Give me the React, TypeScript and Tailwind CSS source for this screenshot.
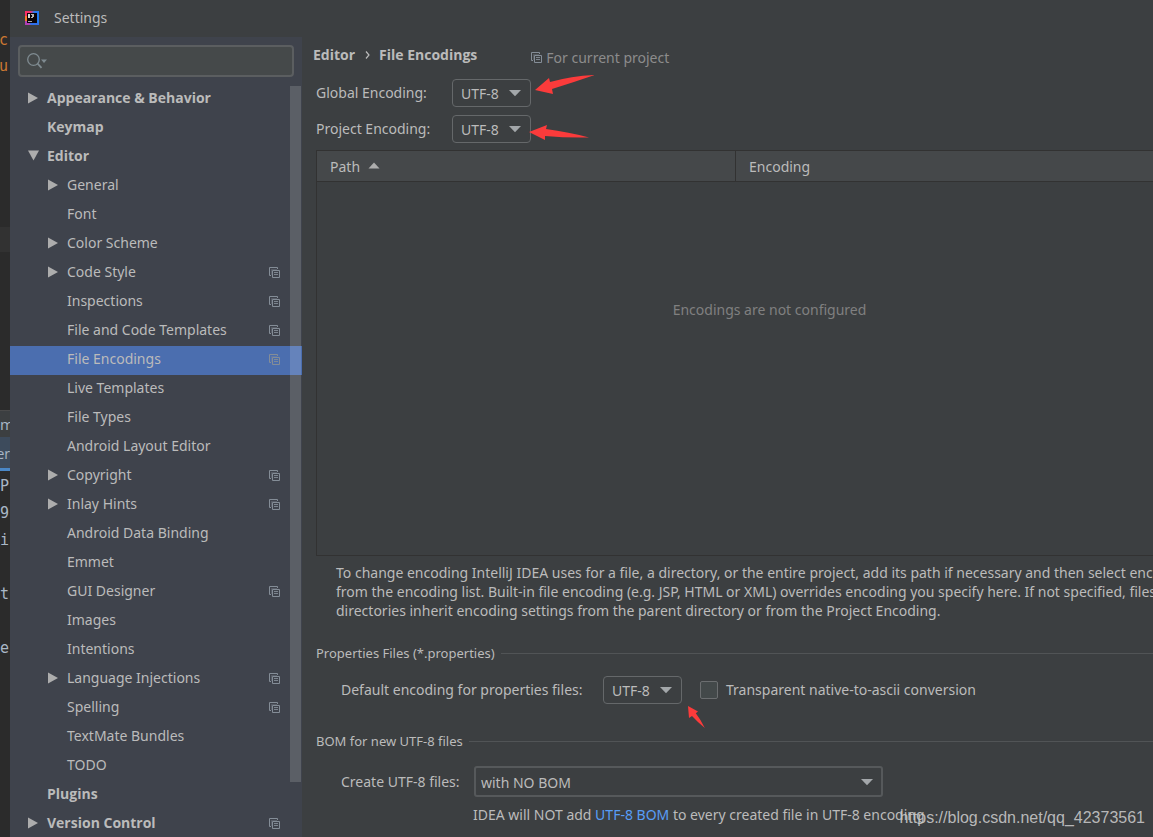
import React from "react";

type TreeItem = {
  label: string;
  level: 0 | 1;
  arrow?: "open" | "closed";
  project?: boolean;
  selected?: boolean;
};

const tree: TreeItem[] = [
  { label: "Appearance & Behavior", level: 0, arrow: "closed" },
  { label: "Keymap", level: 0 },
  { label: "Editor", level: 0, arrow: "open" },
  { label: "General", level: 1, arrow: "closed" },
  { label: "Font", level: 1 },
  { label: "Color Scheme", level: 1, arrow: "closed" },
  { label: "Code Style", level: 1, arrow: "closed", project: true },
  { label: "Inspections", level: 1, project: true },
  { label: "File and Code Templates", level: 1, project: true },
  { label: "File Encodings", level: 1, project: true, selected: true },
  { label: "Live Templates", level: 1 },
  { label: "File Types", level: 1 },
  { label: "Android Layout Editor", level: 1 },
  { label: "Copyright", level: 1, arrow: "closed", project: true },
  { label: "Inlay Hints", level: 1, arrow: "closed", project: true },
  { label: "Android Data Binding", level: 1 },
  { label: "Emmet", level: 1 },
  { label: "GUI Designer", level: 1, project: true },
  { label: "Images", level: 1 },
  { label: "Intentions", level: 1 },
  { label: "Language Injections", level: 1, arrow: "closed", project: true },
  { label: "Spelling", level: 1, project: true },
  { label: "TextMate Bundles", level: 1 },
  { label: "TODO", level: 1 },
  { label: "Plugins", level: 0 },
  { label: "Version Control", level: 0, arrow: "closed", project: true },
];

function Logo() {
  return (
    <svg width="14" height="14" viewBox="0 0 14 14" aria-hidden="true">
      <defs>
        <linearGradient id="ij" x1="0" y1="0" x2="1" y2="0.4">
          <stop offset="0" stopColor="#ff2d62" />
          <stop offset="0.35" stopColor="#f0306f" />
          <stop offset="0.6" stopColor="#2a78f0" />
          <stop offset="1" stopColor="#1f7bf2" />
        </linearGradient>
      </defs>
      <rect width="14" height="14" fill="url(#ij)" />
      <path d="M0 5h3v5H0z" fill="#fb7a2b" />
      <path d="M0 10h3l3 4H0z" fill="#b03fb4" />
      <path d="M5 12h9v2H6z" fill="#2f6fe8" />
      <rect x="2" y="2" width="10" height="10" fill="#0b0508" />
      <path d="M3 3h2v4H3z" fill="#d8d8d8" />
      <path d="M6 3h3v3H8v1H6V6h1V4H6z" fill="#b4b4b4" />
      <path d="M3 10h4v1H3z" fill="#a8a8a8" />
    </svg>
  );
}

function ProjectIcon() {
  return (
    <svg width="11" height="11" viewBox="0 0 11 11" fill="none" stroke="#848d97" aria-hidden="true" className="shrink-0">
      <path d="M2 8.500H0.500v-8h8V2" />
      <path d="M2.500 8V2.500H8" strokeOpacity="0.35" />
      <path d="M3.500 3.500h7v7h-7z" />
      <path d="M5 5.500h4M5 7.500h4" strokeOpacity="0.9" />
    </svg>
  );
}

function TreeArrow({ open }: { open: boolean }) {
  return (
    <svg width="12" height="12" viewBox="0 0 12 12" fill="#adadad" aria-hidden="true">
      {open ? <path d="M1 0.500h11L6.500 10.500z" /> : <path d="M1 0.500v11L11 6z" />}
    </svg>
  );
}

function Combo({ id, value, wide }: { id: string; value: string; wide?: boolean }) {
  return (
    <span className={wide ? "relative block h-[31px] w-[409px]" : "relative block h-7 w-[79px]"}>
      <select
        id={id}
        defaultValue={value}
        className={
          wide
            ? "block h-full w-full appearance-none rounded-[3px] border-2 border-[#56595b] bg-[#3c3f41] pt-[2px] pl-[5px] text-[#bbbbbb] outline-none"
            : "block h-full w-full appearance-none rounded border border-[#65686a] bg-[#3c3f41] pt-px pl-2 text-[#bbbbbb] outline-none"
        }
      >
        <option>{value}</option>
      </select>
      <svg
        width="12"
        height="7"
        viewBox="0 0 12 7"
        fill="#a3a7aa"
        aria-hidden="true"
        className="pointer-events-none absolute top-1/2 right-[10px] -translate-y-1/2"
      >
        <path d="M0 0.500h12L6 6.800z" />
      </svg>
    </span>
  );
}

function EditorEdge() {
  return (
    <div aria-hidden="true" className="flex w-[10px] shrink-0 flex-col overflow-hidden bg-[#2b2b2b] font-['DejaVu_Sans_Mono',monospace] text-[15px] text-[#a9b7c6]">
      <div className="flex h-[79px] flex-col items-end pt-[27px] pr-[2px] leading-[26px] text-[#cc7832]">
        <span>c</span>
        <span>u</span>
      </div>
      <div className="mt-[148px] h-[25px] shrink-0 bg-[#323232]" />
      <div className="mt-[158px] h-[27px] shrink-0 border-t border-[#4a4a4a] bg-[#3c3f41] font-['Open_Sans',sans-serif] leading-[26px]">m</div>
      <div className="flex h-[34px] shrink-0 justify-end border-b-[3px] border-[#4a88c7] bg-[#3d4b5c] font-['Open_Sans',sans-serif] text-[14px] leading-[34px]">er</div>
      <div className="flex flex-col items-end pt-[2px] pr-[1px] leading-[27px]">
        <span>P</span>
        <span>9</span>
        <span>i</span>
        <span className="h-[27px]" />
        <span>t</span>
        <span className="h-[27px]" />
        <span>e</span>
      </div>
    </div>
  );
}

function GroupTitle({ children }: { children: React.ReactNode }) {
  return (
    <h2 className="flex items-center gap-[6px] text-[13px] leading-5">
      {children}
      <span className="h-px flex-1 bg-[#515456]" />
    </h2>
  );
}

export default function App() {
  return (
    <div className="relative flex h-screen overflow-hidden bg-[#3c3f41] font-['Noto_Sans',sans-serif] text-[14px] leading-5 text-[#bbbbbb]">
      <EditorEdge />
      <div className="flex min-w-0 flex-1 flex-col">
        <header className="flex h-[37px] shrink-0 items-center gap-[15px] pb-px pl-[15px]">
          <Logo />
          <h1>Settings</h1>
        </header>
        <div className="flex min-h-0 flex-1">
          <aside className="flex w-[292px] shrink-0 flex-col bg-[#3f434c]">
            <label className="mx-2 mt-2 flex h-8 shrink-0 items-center rounded-[4px] border-2 border-[#5b5e60] bg-[#45494a] pl-[7px]">
              <svg width="22" height="16" viewBox="0 0 22 16" fill="none" aria-hidden="true">
                <circle cx="6.500" cy="6.500" r="5.800" stroke="#7f8b91" strokeWidth="1.300" />
                <path d="M10.500 10.500l4 4.300" stroke="#7f8b91" strokeWidth="1.800" />
                <path d="M14 6.500h6l-3 3.500z" fill="#7f8b91" />
              </svg>
              <input type="text" aria-label="Search settings" className="min-w-0 flex-1 bg-transparent outline-none" />
            </label>
            <nav className="relative mt-2 min-h-0 flex-1 overflow-hidden">
              <ul>
                {tree.map((item) => (
                  <li key={item.label} className={item.selected ? "bg-[#4b6eaf]" : ""}>
                    <a
                      href="#"
                      className={
                        item.level === 0
                          ? "flex h-[29px] items-center pr-[22px] pb-[3px] pl-[17px] font-['Open_Sans',sans-serif] font-bold"
                          : "flex h-[29px] items-center pr-[22px] pb-[3px] pl-[37px]"
                      }
                    >
                      <span className="flex w-5 shrink-0">{item.arrow && <TreeArrow open={item.arrow === "open"} />}</span>
                      <span className="flex-1 whitespace-nowrap">{item.label}</span>
                      {item.project && <ProjectIcon />}
                    </a>
                  </li>
                ))}
              </ul>
              <div className="absolute top-px right-px h-[696px] w-[11px] bg-white/15" />
            </nav>
          </aside>
          <main className="min-w-0 flex-1 overflow-hidden">
            <div className="-mr-[70px] pl-[14px]">
              <div className="-ml-[3px] flex h-9 items-center">
                <nav className="flex items-center font-['Open_Sans',sans-serif] font-bold">
                  <a href="#">Editor</a>
                  <svg width="5" height="8" viewBox="0 0 5 8" fill="none" stroke="#bbbbbb" strokeWidth="1.200" aria-hidden="true" className="mr-[9px] ml-[10px]">
                    <path d="M1 0.500L4 4L1 7.500" />
                  </svg>
                  <a href="#">File Encodings</a>
                </nav>
                <p className="mt-[5px] ml-[54px] flex items-center gap-1 text-[#8c8c8c]">
                  <ProjectIcon />
                  For current project
                </p>
              </div>
              <div className="flex flex-col gap-2 pt-[6px]">
                <div className="flex items-center">
                  <label htmlFor="global" className="w-[136px]">Global Encoding:</label>
                  <Combo id="global" value="UTF-8" />
                </div>
                <div className="flex items-center">
                  <label htmlFor="project" className="w-[136px]">Project Encoding:</label>
                  <Combo id="project" value="UTF-8" />
                </div>
              </div>
              <table className="mt-[7px] w-full table-fixed border-collapse border border-[#323232] text-left">
                <thead className="bg-[#45484a]">
                  <tr className="h-[31px] border-b border-[#323232]">
                    <th className="w-[419px] border-r border-[#323232] pt-px pl-[13px] font-normal">
                      <span className="flex items-center gap-2">
                        Path
                        <svg width="12" height="7" viewBox="0 0 12 7" fill="#adadad" aria-hidden="true" className="mb-[2px]">
                          <path d="M0.500 6.500h11L6 0.500z" />
                        </svg>
                      </span>
                    </th>
                    <th className="pt-px pl-[13px] font-normal">Encoding</th>
                  </tr>
                </thead>
                <tbody>
                  <tr>
                    <td colSpan={2} className="h-[374px] pt-[118px] text-center align-top text-[#808080]">
                      Encodings are not configured
                    </td>
                  </tr>
                </tbody>
              </table>
              <p className="mt-[7px] pl-5 leading-[19px] whitespace-nowrap">
                To change encoding IntelliJ IDEA uses for a file, a directory, or the entire project, add its path if necessary and then select encoding
                <br />
                from the encoding list. Built-in file encoding (e.g. JSP, HTML or XML) overrides encoding you specify here. If not specified, files and
                <br />
                directories inherit encoding settings from the parent directory or from the Project Encoding.
              </p>
              <section className="mt-[23px]">
                <GroupTitle>Properties Files (*.properties)</GroupTitle>
                <div className="mt-[13px] flex items-center pl-[25px]">
                  <label htmlFor="properties" className="w-[262px]">Default encoding for properties files:</label>
                  <Combo id="properties" value="UTF-8" />
                  <label className="ml-[18px] flex items-center gap-2">
                    <input type="checkbox" className="h-[18px] w-[18px] appearance-none rounded-[2px] border border-[#6b6e70] bg-[#43494a]" />
                    Transparent native-to-ascii conversion
                  </label>
                </div>
              </section>
              <section className="mt-[27px]">
                <GroupTitle>BOM for new UTF-8 files</GroupTitle>
                <div className="mt-[15px] flex items-center pl-[25px]">
                  <label htmlFor="bom" className="w-[133px]">Create UTF-8 files:</label>
                  <Combo id="bom" value="with NO BOM" wide />
                </div>
                <p className="mt-[8px] pl-[157px]">
                  IDEA will NOT add <a href="#" className="text-[#589df6]">UTF-8 BOM</a> to every created file in UTF-8 encoding
                </p>
              </section>
            </div>
          </main>
        </div>
      </div>
      <svg width="59" height="20" viewBox="0 0 59 20" fill="#fb3b3b" aria-hidden="true" className="absolute top-[75px] left-[535px]">
        <path d="M0 15L14 3l1 4Q37 1 60 0Q40 7 17 14l1 5z" />
      </svg>
      <svg width="60" height="16" viewBox="0 0 60 16" fill="#fb3b3b" aria-hidden="true" className="absolute top-[125px] left-[529px]">
        <path d="M0 7L18 0l-1 4Q40 7 60 12.500Q38 13 16 11l0 4z" />
      </svg>
      <svg width="18" height="23" viewBox="0 0 18 23" fill="#fb3b3b" aria-hidden="true" className="absolute top-[706px] left-[687px]">
        <path d="M1 0L11 5.500l-2.200 1.700Q14 14 17.800 22Q11 16.500 5 10l-3 2z" />
      </svg>
      <p className="absolute right-[8px] bottom-[9px] font-['Liberation_Sans',Arial,sans-serif] text-[16px] text-[#c8c8c8]/90">
        https://blog.csdn.net/qq_42373561
      </p>
    </div>
  );
}
